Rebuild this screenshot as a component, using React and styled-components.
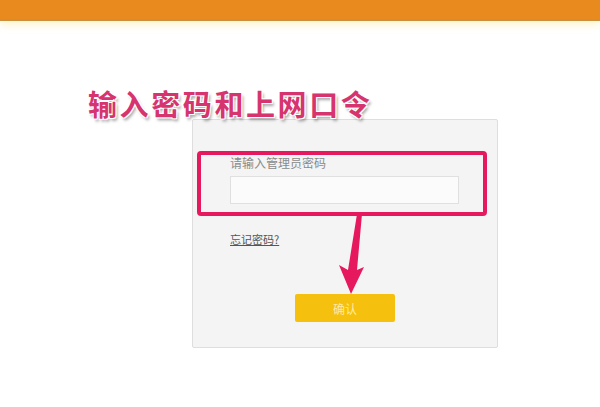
import React from 'react';
import styled, {createGlobalStyle} from 'styled-components';

const GlobalStyle = createGlobalStyle`
  html, body {
    margin: 0;
    padding: 0;
    background: #ffffff;
    font-family: "Noto Sans CJK SC", "Noto Sans", sans-serif;
  }
`

const Page = styled.div`
  width: 600px;
  height: 407px;
  overflow: hidden;
  background: #fff;
`

const TopBar = styled.div`
  height: 19px;
  background: #e98a1e;
  border-bottom: 2px solid #c9913f;
  box-shadow: 0 3px 8px rgba(255, 236, 170, 0.7);
`

const Stage = styled.div`
  padding: 65px 0 0 88px;
`

const Title = styled.h1`
  margin: 0;
  height: 34px;
  font-size: 29px;
  line-height: 34px;
  font-weight: 700;
  letter-spacing: 2.6px;
  color: #d6346f;
  text-shadow:
    -1px -1px 0 #fff, 1px -1px 0 #fff, -1px 1px 0 #fff, 1px 1px 0 #fff,
    2px 3px 3px rgba(0, 0, 0, 0.35);
  position: relative;
  z-index: 2;
`

const Card = styled.div`
  position: relative;
  box-sizing: border-box;
  width: 306px;
  height: 229px;
  margin: -1px 0 0 104px;
  background: #f4f4f4;
  border: 1px solid #dedede;
  border-radius: 2px;
  padding: 35px 0 0 37px;
  display: flex;
  flex-direction: column;
`

const Label = styled.div`
  font-size: 12px;
  line-height: 16px;
  color: #8a8a8a;
`

const Input = styled.div`
  box-sizing: border-box;
  margin-top: 5px;
  width: 229px;
  height: 28px;
  background: #fbfbfb;
  border: 1px solid #e0e0e0;
`

const Forgot = styled.a`
  margin-top: 28px;
  align-self: flex-start;
  font-size: 11px;
  line-height: 14px;
  color: #555;
  text-decoration: underline;
`

const Confirm = styled.button`
  align-self: center;
  margin: 48px 0 0 -37px;
  width: 100px;
  height: 28px;
  border: none;
  border-radius: 2px;
  background: #f6c00e;
  color: #fdeba6;
  font-family: inherit;
  font-size: 12px;
`

const Highlight = styled.div`
  position: absolute;
  left: 4px;
  top: 31px;
  width: 290px;
  height: 65px;
  box-sizing: border-box;
  border: 4px solid #e6195f;
  border-radius: 4px;
`

const Arrow = styled.svg`
  position: absolute;
  left: 142px;
  top: 94px;
  overflow: visible;
`

export default function App() {
  return (
    <Page>
      <GlobalStyle />
      <TopBar />
      <Stage>
        <Title>输入密码和上网口令</Title>
        <Card>
          <Label>请输入管理员密码</Label>
          <Input />
          <Forgot>忘记密码?</Forgot>
          <Confirm>确认</Confirm>
          <Highlight />
          <Arrow width="40" height="82" viewBox="0 0 40 82">
            <path d="M22 0 L27 0 L22 56 L29 53 L16 80 L4 51 L13 56 Z" fill="#e6195f" />
          </Arrow>
        </Card>
      </Stage>
    </Page>
  );
}
